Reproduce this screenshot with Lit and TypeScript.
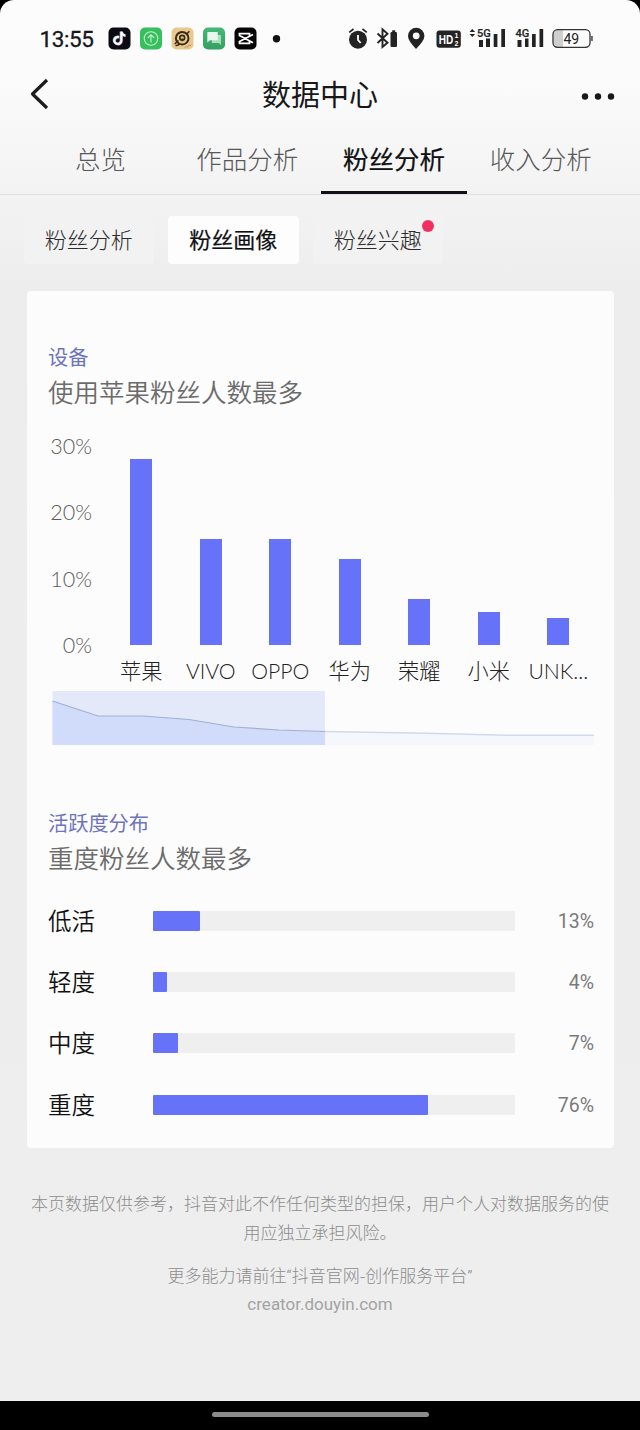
import { LitElement, html, css, svg } from "lit";
import { customElement } from "lit/decorators.js";
import { classMap } from "lit/directives/class-map.js";
import { styleMap } from "lit/directives/style-map.js";

@customElement("status-bar")
class StatusBar extends LitElement {
  static styles = css`
    :host { display: block; height: 76px; }
    .bar { display: block; }
    .clock { font: 400 22.5px Roboto, sans-serif; }
    .hd { font: 700 12px "Liberation Sans", sans-serif; }
    .tiny { font: 700 7px "Liberation Sans", sans-serif; }
    .net { font: 500 11.5px Roboto, sans-serif; }
    .level { font: 400 14px Roboto, sans-serif; }
  `;

  render() {
    return html`
      <svg class="bar" width="640" height="76" viewBox="0 0 640 76">
        <defs>
          <linearGradient id="chat" x1="0" y1="0" x2="0" y2="1">
            <stop offset="0" stop-color="#45b878" />
            <stop offset="1" stop-color="#34a162" />
          </linearGradient>
        </defs>
        <text class="clock" x="39.5" y="46.5" textLength="54.5" fill="#17171b" stroke="#17171b" stroke-width=".3">13:55</text>

        <g transform="translate(108.5 27.5)">
          <rect width="22" height="22" rx="5" fill="#0b0a12" />
          <g fill="none" stroke-width="2.3">
            <path d="M10.6 9.7a3.5 3.5 0 1 0 2.3 3.3V4.2c.4 2.3 1.8 3.6 4 3.8" stroke="#8a3550" transform="translate(.6 .6)" />
            <path d="M10.6 9.7a3.5 3.5 0 1 0 2.3 3.3V4.2c.4 2.3 1.8 3.6 4 3.8" stroke="#72b9c2" transform="translate(-.6 -.3)" />
            <path d="M10.6 9.7a3.5 3.5 0 1 0 2.3 3.3V4.2c.4 2.3 1.8 3.6 4 3.8" stroke="#f4f6f8" />
          </g>
        </g>

        <g transform="translate(140 27.5)">
          <rect width="22" height="22" rx="5" fill="#35bf5e" />
          <g fill="none" stroke="#c5f3d0" stroke-width="1.1">
            <circle cx="11" cy="11" r="6.8" />
            <path d="M11 15V7.5M7.8 10.5 11 7.3l3.2 3.2" />
          </g>
        </g>

        <g transform="translate(171.5 27.5)">
          <rect width="22" height="22" rx="5" fill="#e8c98e" />
          <g fill="none" stroke="#3d2b16">
            <circle cx="10.7" cy="10.7" r="6.3" stroke-width="2" />
            <circle cx="10.7" cy="10.2" r="2.4" stroke-width="1.7" />
            <path d="M10.7 11v2.8" stroke-width="1.6" />
            <path d="M3.2 16.5 7 13M14.5 7.2l3.4-3.4M4 18q2 .2 4-1.4" stroke-width="1.5" />
          </g>
          <path d="M13 20.3l2-1.5.8 1 1.6-2.3 1 1 1.5-1.4" stroke="#c28670" stroke-width=".9" fill="none" />
        </g>

        <g transform="translate(203 27.5)">
          <rect width="22" height="22" rx="5" fill="url(#chat)" />
          <path d="M9.5 7.5h7.7q.8 0 .8.8v9.2l-2-2H9.5q-.8 0-.8-.8Z" fill="#a9dfbd" />
          <path d="M5 4.5h9q.8 0 .8.8v6.6q0 .8-.8.8H7l-2.7 2.4V5.3q0-.8.7-.8Z" fill="#e9f7ee" />
        </g>

        <g transform="translate(234.5 27.5)">
          <rect width="22" height="22" rx="5" fill="#050505" />
          <path d="M15 8.3V6.2H5V8l13.5 7.3M18.5 7 5 14v1.8h10v-2.1" fill="none" stroke="#fff" stroke-width="1.8" />
        </g>
        <circle cx="276.5" cy="38.7" r="3.7" fill="#111" />

        <g transform="translate(348 27)">
          <circle cx="10" cy="12.7" r="9" fill="#232324" />
          <path d="M1.2 5.3 5.5 2M18.8 5.3 14.5 2" stroke="#232324" stroke-width="1.7" />
          <path d="M10 8v5l2.7 3" fill="none" stroke="#fff" stroke-width="1.8" />
        </g>

        <g transform="translate(376 28)">
          <path d="M1.5 5.5 11.5 14.7 6.5 19V1.3l5 4.5L1.5 15" fill="none" stroke="#232324" stroke-width="1.9" />
          <rect x="14.5" y="4" width="6.5" height="15" rx="1.2" fill="#232324" />
          <rect x="16.2" y="2.3" width="3" height="2" fill="#232324" />
        </g>

        <path d="M416 49q-8-8.5-8-13a8.2 8.2 0 0 1 16.4 0q0 4.5-8.4 13Z" fill="#232324" />
        <circle cx="416.2" cy="35.8" r="3.4" fill="#fff" />

        <rect x="436.5" y="30.5" width="24.3" height="17.3" rx="3" fill="#232324" />
        <text class="hd" x="438.8" y="43.6" textLength="14.5" lengthAdjust="spacingAndGlyphs" fill="#fff">HD</text>
        <text class="tiny" x="454.6" y="38" fill="#fff">1</text>
        <text class="tiny" x="454.6" y="46.3" fill="#fff">2</text>

        <path d="m469.5 32 2.8-3 2.8 3ZM469.5 34h5.6l-2.8 3Z" fill="#232324" />
        <text class="net" x="477" y="36.8" textLength="13.8" lengthAdjust="spacingAndGlyphs" fill="#232324" stroke="#232324" stroke-width=".2">5G</text>
        <path d="M479 40h4v7h-4zM486 38.5h4V47h-4zM493.7 34h3.7v13h-3.7zM501.3 29h3.7v18h-3.7z" fill="#232324" />

        <text class="net" x="515.5" y="36.8" textLength="13.8" lengthAdjust="spacingAndGlyphs" fill="#232324" stroke="#232324" stroke-width=".2">4G</text>
        <path d="M517.5 40h4v7h-4zM525 38.5h3.5V47H525zM532 34h3.7v13H532zM539.5 29h3.7v18h-3.7z" fill="#232324" />

        <path d="M557 30h6v17h-6q-3.5 0-3.5-3.5v-10Q553.5 30 557 30Z" fill="#cfcfcf" />
        <rect x="553" y="29.7" width="37" height="17.6" rx="4.5" fill="none" stroke="#333" stroke-width="1.3" />
        <path d="M591.2 36h1.5v5h-1.5z" fill="#444" />
        <text class="level" x="563.5" y="43.7" textLength="15.5" fill="#222">49</text>
      </svg>
    `;
  }
}

@customElement("device-chart")
class DeviceChart extends LitElement {
  static styles = css`
    :host { display: block; }
    .plot { display: flex; height: 199px; margin-top: 1px; }
    .axis {
      display: flex; flex-direction: column; justify-content: space-between;
      width: 65px; margin: -13px 14.5px -13px 0;
      text-align: right; font: 300 21.5px/26px Lato, sans-serif; color: #5c5c5c;
    }
    .bars { flex: 1; display: grid; grid-template-columns: repeat(7, 1fr); align-items: end; justify-items: center; }
    .bar { width: 22px; background: #6672f8; }
    .names {
      display: grid; grid-template-columns: repeat(7, 1fr); margin: 10px 0 0 79.5px; height: 31px;
      text-align: center; font: 300 21.2px/32px Lato, "Noto Sans CJK SC", sans-serif; color: #222;
    }
    .name { white-space: nowrap; }
    .range { display: block; margin: 5px 0 0 25px; }
  `;

  private devices: [string, number][] = [
    ["苹果", 28], ["VIVO", 16], ["OPPO", 16], ["华为", 13], ["荣耀", 7], ["小米", 5], ["UNK...", 4],
  ];

  render() {
    return html`
      <div class="plot">
        <div class="axis"><span>30%</span><span>20%</span><span>10%</span><span>0%</span></div>
        <div class="bars">
          ${this.devices.map(([, v]) => html`<div class="bar" style=${styleMap({ height: `${(v / 30) * 100}%` })}></div>`)}
        </div>
      </div>
      <div class="names">${this.devices.map(([n]) => html`<span class="name">${n}</span>`)}</div>
      <svg class="range" width="542" height="55" viewBox="0 0 542 55">
        ${svg`
          <path d="M.5 10 46 25H91L137 28.5 182 36 227 39 273 40.5 373 42.3 455 44.3H542V54H.5Z" fill="#f5f7fd"/>
          <rect x=".5" y="0" width="272.5" height="54" fill="#e4e9f9"/>
          <path d="M.5 10 46 25H91L137 28.5 182 36 227 39 273 40.5V54H.5Z" fill="#d1dcfa"/>
          <path d="M.5 10 46 25H91L137 28.5 182 36 227 39 273 40.5" fill="none" stroke="#a3afd3" stroke-width="1.2"/>
          <path d="M273 40.5 373 42.3 455 44.3H542" fill="none" stroke="#d3d9ec" stroke-width="1.5"/>
        `}
      </svg>
    `;
  }
}

@customElement("activity-list")
class ActivityList extends LitElement {
  static styles = css`
    :host { display: grid; grid-auto-rows: 61.3px; }
    .row { display: grid; grid-template-columns: 105px 362px 1fr; align-items: center; }
    .label { font-size: 23.5px; line-height: 34px; color: #111; font-weight: 350; margin-top: -2px; }
    .track { height: 20px; background: #efeff0; border-radius: 1px; }
    .fill { height: 100%; background: #6672f8; border-radius: 1px; }
    .value { text-align: right; font: 400 19.5px Roboto, sans-serif; color: #7a7a7a; margin: 1px -1px 0 0; }
  `;

  private rows: [string, number][] = [["低活", 13], ["轻度", 4], ["中度", 7], ["重度", 76]];

  render() {
    return this.rows.map(
      ([label, v]) => html`
        <div class="row">
          <span class="label">${label}</span>
          <div class="track"><div class="fill" style=${styleMap({ width: `${v}%` })}></div></div>
          <span class="value">${v}%</span>
        </div>
      `
    );
  }
}

@customElement("app-root")
class AppRoot extends LitElement {
  static styles = css`
    :host {
      display: block; height: 1430px; background: #000; overflow: hidden;
      font-family: "Noto Sans CJK SC", sans-serif;
    }
    .screen {
      height: 1401px; box-sizing: border-box; border-radius: 14px 14px 0 0;
      background: linear-gradient(#fcfcfc 0, #fbfbfb 80px, #f3f3f4 190px, #ededed 290px, #eee 100%);
    }
    .head { display: grid; grid-template-columns: 60px 1fr 60px; height: 38px; align-items: center; }
    .title { text-align: center; font-size: 29px; line-height: 38px; font-weight: 400; color: #17181a; margin-top: -5px; }
    .back { display: block; margin: -3px 0 0 29px; }
    .more { display: block; }
    .tabs { display: grid; grid-template-columns: repeat(4, 146.8px); padding: 11px 27px 0; height: 69px; border-bottom: 1px solid #e2e2e4; }
    .tab {
      box-sizing: border-box; height: 69px; text-align: center; font-size: 25.5px; line-height: 65px; color: #585859;
      font-weight: 300;
    }
    .tab.active { color: #111214; font-weight: 400; -webkit-text-stroke: .2px #111214; border-bottom: 3px solid #0f1216; }
    .pills { display: flex; gap: 14px; padding: 21px 23.5px 0; }
    .pill {
      width: 130.5px; height: 48px; line-height: 45px; text-align: center; font-size: 22px; border-radius: 4px;
      background: #f2f2f2; color: #2c2c2c; font-weight: 300; position: relative;
    }
    .pill.active { background: #fdfdfd; color: #101112; font-weight: 400; -webkit-text-stroke: .2px #101112; }
    .dot { position: absolute; left: 109px; top: 4px; width: 12px; height: 12px; border-radius: 50%; background: #f0315f; }
    .card { margin: 27px 26px 0 27px; height: 857px; padding: 51px 21px 0; box-sizing: border-box; background: #fcfcfc; border-radius: 4px; }
    .kicker { font-size: 20.2px; line-height: 30px; color: #6d74bd; }
    .headline { font-size: 25.5px; line-height: 35px; padding-bottom: 3px; margin-top: 1px; color: #6b6b6b; font-weight: 350; }
    .chart { margin: 34px 0 0 -21px; display: flow-root; }
    .second { margin-top: 62px; }
    .activity { margin-top: 13px; }
    .notes { padding-top: 40px; text-align: center; font-size: 17px; line-height: 29px; color: #8c8c8c; font-weight: 300; }
    .line { display: block; white-space: nowrap; }
    .more-info { margin-top: 14px; }
    .latin { font-family: Roboto, sans-serif; }
    .link { font: 400 17px/29px Roboto, sans-serif; color: #a3a3a3; margin-top: -1px; }
    .nav { height: 29px; display: flex; align-items: center; justify-content: center; }
    .handle { width: 217px; height: 5px; border-radius: 3px; background: #8b8b8b; margin-top: -2px; }
  `;

  private tabs = ["总览", "作品分析", "粉丝分析", "收入分析"];
  private pills = ["粉丝分析", "粉丝画像", "粉丝兴趣"];

  render() {
    return html`
      <main class="screen">
        <status-bar></status-bar>
        <header class="head">
          <svg class="back" width="22" height="36" viewBox="0 0 22 36">
            <path d="M18 4 3.5 18 18 32" fill="none" stroke="#1b1c1e" stroke-width="3.2" stroke-linejoin="round" />
          </svg>
          <span class="title">数据中心</span>
          <svg class="more" width="38" height="12" viewBox="0 0 38 12">
            <g fill="#17181a"><circle cx="5" cy="7.5" r="3.2" /><circle cx="18" cy="7.5" r="3.2" /><circle cx="31" cy="7.5" r="3.2" /></g>
          </svg>
        </header>
        <nav class="tabs">
          ${this.tabs.map((t, i) => html`<span class=${classMap({ tab: true, active: i === 2 })}>${t}</span>`)}
        </nav>
        <div class="pills">
          ${this.pills.map(
            (p, i) => html`<span class=${classMap({ pill: true, active: i === 1 })}>${p}${i === 2 ? html`<i class="dot"></i>` : ""}</span>`
          )}
        </div>
        <section class="card">
          <div class="kicker">设备</div>
          <div class="headline">使用苹果粉丝人数最多</div>
          <device-chart class="chart"></device-chart>
          <div class="kicker second">活跃度分布</div>
          <div class="headline">重度粉丝人数最多</div>
          <activity-list class="activity"></activity-list>
        </section>
        <footer class="notes">
          <span class="line">本页数据仅供参考，抖音对此不作任何类型的担保，用户个人对数据服务的使</span>
          <span class="line">用应独立承担风险。</span>
          <span class="line more-info">更多能力请前往<span class="latin">“</span>抖音官网-创作服务平台<span class="latin">”</span></span>
          <span class="line link">creator.douyin.com</span>
        </footer>
      </main>
      <div class="nav"><div class="handle"></div></div>
    `;
  }
}
